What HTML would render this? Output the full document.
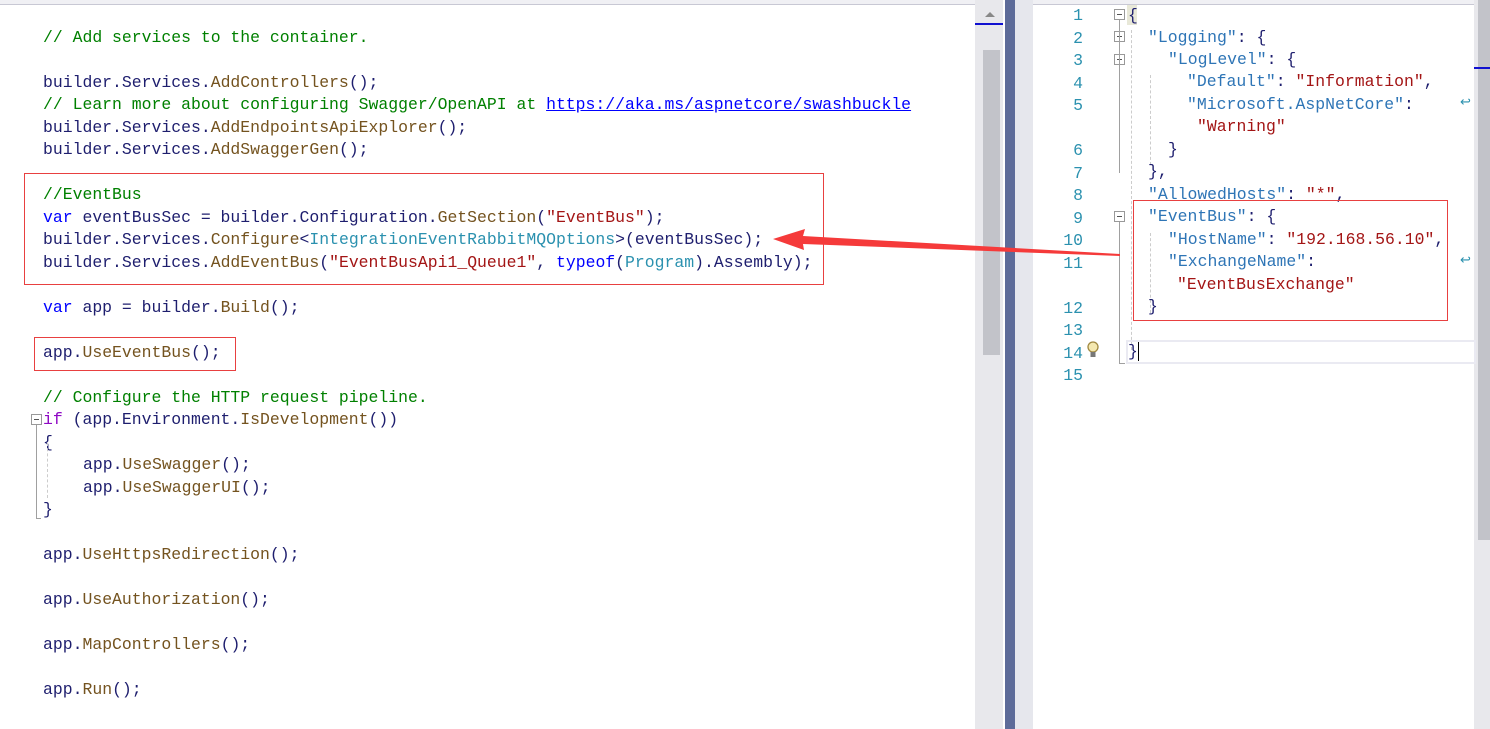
<!DOCTYPE html>
<html><head><meta charset="utf-8"><style>
body{margin:0;width:1490px;height:729px;overflow:hidden;background:#fff;position:relative;font-family:"Liberation Mono",monospace;font-size:16.45px;color:#1e1e6e}
.l{position:absolute;white-space:pre;line-height:22.5px;height:22.5px;margin-top:1px}
.c{color:#008000}.k{color:#0000ff}.m{color:#74531f}.t{color:#2b91af}.s{color:#a31515}.u{color:#0000ff;text-decoration:underline}.p{color:#8f08c4}
.j{color:#2e75b6}.n{position:absolute;color:#2b91af;text-align:right;width:40px;left:1043px;line-height:22.5px;white-space:pre;margin-top:1px}
.box{position:absolute;border:1px solid #e84040}
.fold{position:absolute;width:9px;height:9px;border:1px solid #999;background:#fff}
.fold:after{content:"";position:absolute;left:2px;top:4px;width:5px;height:1px;background:#555}
</style></head><body>
<div style="position:absolute;left:0;top:0;width:975px;height:4px;background:#f0f0f4;border-bottom:1px solid #c8c8d4"></div>
<div style="position:absolute;left:975px;top:0;width:28px;height:729px;background:#e8e8ec"></div>
<div style="position:absolute;left:983px;top:50px;width:17px;height:305px;background:#c2c3c9"></div>
<div style="position:absolute;left:975px;top:23px;width:28px;height:2px;background:#1010d0"></div>
<div style="position:absolute;left:985px;top:12px;width:0;height:0;border-left:5px solid transparent;border-right:5px solid transparent;border-bottom:5px solid #888"></div>
<div style="position:absolute;left:1005px;top:0;width:10px;height:729px;background:#5d6b99"></div>
<div style="position:absolute;left:1015px;top:0;width:18px;height:729px;background:#e6e7ed"></div>
<div style="position:absolute;left:1033px;top:0;width:441px;height:4px;background:#f0f0f4;border-bottom:1px solid #c8c8d4"></div>
<div style="position:absolute;left:1474px;top:0;width:16px;height:729px;background:#e8e8ec"></div>
<div style="position:absolute;left:1478px;top:0;width:12px;height:540px;background:#c2c3c9"></div>
<div style="position:absolute;left:1474px;top:67px;width:16px;height:2px;background:#1010d0"></div>

<div class="l c" style="left:43px;top:26px">// Add services to the container.</div>
<div class="l" style="left:43px;top:71px">builder.Services.<span class="m">AddControllers</span>();</div>
<div class="l" style="left:43px;top:93px"><span class="c">// Learn more about configuring Swagger/OpenAPI at </span><span class="u">https://aka.ms/aspnetcore/swashbuckle</span></div>
<div class="l" style="left:43px;top:116px">builder.Services.<span class="m">AddEndpointsApiExplorer</span>();</div>
<div class="l" style="left:43px;top:138px">builder.Services.<span class="m">AddSwaggerGen</span>();</div>
<div class="l c" style="left:43px;top:183px">//EventBus</div>
<div class="l" style="left:43px;top:206px"><span class="k">var</span> eventBusSec = builder.Configuration.<span class="m">GetSection</span>(<span class="s">"EventBus"</span>);</div>
<div class="l" style="left:43px;top:228px">builder.Services.<span class="m">Configure</span>&lt;<span class="t">IntegrationEventRabbitMQOptions</span>&gt;(eventBusSec);</div>
<div class="l" style="left:43px;top:251px">builder.Services.<span class="m">AddEventBus</span>(<span class="s">"EventBusApi1_Queue1"</span>, <span class="k">typeof</span>(<span class="t">Program</span>).Assembly);</div>
<div class="l" style="left:43px;top:296px"><span class="k">var</span> app = builder.<span class="m">Build</span>();</div>
<div class="l" style="left:43px;top:341px">app.<span class="m">UseEventBus</span>();</div>
<div class="l c" style="left:43px;top:386px">// Configure the HTTP request pipeline.</div>
<div class="l" style="left:43px;top:408px"><span class="p">if</span> (app.Environment.<span class="m">IsDevelopment</span>())</div>
<div class="l" style="left:43px;top:431px">{</div>
<div class="l" style="left:83px;top:453px">app.<span class="m">UseSwagger</span>();</div>
<div class="l" style="left:83px;top:476px">app.<span class="m">UseSwaggerUI</span>();</div>
<div class="l" style="left:43px;top:498px">}</div>
<div class="l" style="left:43px;top:543px">app.<span class="m">UseHttpsRedirection</span>();</div>
<div class="l" style="left:43px;top:588px">app.<span class="m">UseAuthorization</span>();</div>
<div class="l" style="left:43px;top:633px">app.<span class="m">MapControllers</span>();</div>
<div class="l" style="left:43px;top:678px">app.<span class="m">Run</span>();</div>
<div class="fold" style="left:31px;top:414px"></div>
<div style="position:absolute;left:36px;top:425px;width:1px;height:93px;background:#a0a0a0"></div>
<div style="position:absolute;left:36px;top:518px;width:5px;height:1px;background:#a0a0a0"></div>
<div style="position:absolute;left:47px;top:443px;width:0;height:55px;border-left:1px dashed #ccc"></div>

<div class="box" style="left:24px;top:173px;width:798px;height:110px"></div>
<div class="box" style="left:34px;top:337px;width:200px;height:32px"></div>

<div class="n" style="top:4px">1
2
3
4
5

6
7
8
9
10
11

12
13
14
15</div>
<div class="fold" style="left:1114px;top:9px"></div>
<div class="fold" style="left:1114px;top:31px"></div>
<div class="fold" style="left:1114px;top:54px"></div>
<div class="fold" style="left:1114px;top:211px"></div>
<div style="position:absolute;left:1119px;top:20px;width:1px;height:153px;background:#a0a0a0"></div>
<div style="position:absolute;left:1119px;top:222px;width:1px;height:142px;background:#a0a0a0"></div>
<div style="position:absolute;left:1119px;top:363px;width:6px;height:1px;background:#a0a0a0"></div>
<div style="position:absolute;left:1131px;top:30px;height:320px;border-left:1px dashed #ccc"></div>
<div style="position:absolute;left:1150px;top:75px;height:90px;border-left:1px dashed #ccc"></div>
<div style="position:absolute;left:1150px;top:233px;height:80px;border-left:1px dashed #ccc"></div>
<div style="position:absolute;left:1126px;top:340px;width:346px;height:20px;border:2px solid #eaeaf2"></div>
<div style="position:absolute;left:1127px;top:5px;width:10px;height:20px;background:#e8e8d8"></div>
<div class="l" style="left:1128px;top:4px">{</div>
<div class="l" style="left:1148px;top:26px"><span class="j">"Logging"</span>: {</div>
<div class="l" style="left:1168px;top:48px"><span class="j">"LogLevel"</span>: {</div>
<div class="l" style="left:1187px;top:70px"><span class="j">"Default"</span>: <span class="s">"Information"</span>,</div>
<div class="l" style="left:1187px;top:93px"><span class="j">"Microsoft.AspNetCore"</span>:</div>
<div class="l" style="left:1197px;top:115px"><span class="s">"Warning"</span></div>
<div class="l" style="left:1168px;top:138px">}</div>
<div class="l" style="left:1148px;top:160px">},</div>
<div class="l" style="left:1148px;top:183px"><span class="j">"AllowedHosts"</span>: <span class="s">"*"</span>,</div>
<div class="l" style="left:1148px;top:205px;background:#fff"><span class="j">"EventBus"</span>: {</div>
<div class="l" style="left:1168px;top:228px"><span class="j">"HostName"</span>: <span class="s">"192.168.56.10"</span>,</div>
<div class="l" style="left:1168px;top:250px"><span class="j">"ExchangeName"</span>:</div>
<div class="l" style="left:1177px;top:273px"><span class="s">"EventBusExchange"</span></div>
<div class="l" style="left:1148px;top:295px">}</div>
<div class="l" style="left:1128px;top:340px">}</div>
<div style="position:absolute;left:1138px;top:342px;width:1px;height:19px;background:#000"></div>
<svg style="position:absolute;left:1086px;top:341px" width="14" height="18"><circle cx="7" cy="6" r="5" fill="#f4e8b0" stroke="#a08840" stroke-width="1.3"/><rect x="4.5" y="11" width="5" height="5" fill="#777"/></svg>
<div style="position:absolute;left:1460px;top:95px;color:#2b91af;font-size:13px;font-family:'DejaVu Sans'">↩</div>
<div style="position:absolute;left:1460px;top:253px;color:#2b91af;font-size:13px;font-family:'DejaVu Sans'">↩</div>
<div class="box" style="left:1133px;top:200px;width:313px;height:119px"></div>

<svg style="position:absolute;left:0;top:0" width="1490" height="729">
<polygon points="773,239 805,229 803,236 1120,254 1120,256 803,244 804,250" fill="#f53a3a"/>
</svg>
</body></html>
